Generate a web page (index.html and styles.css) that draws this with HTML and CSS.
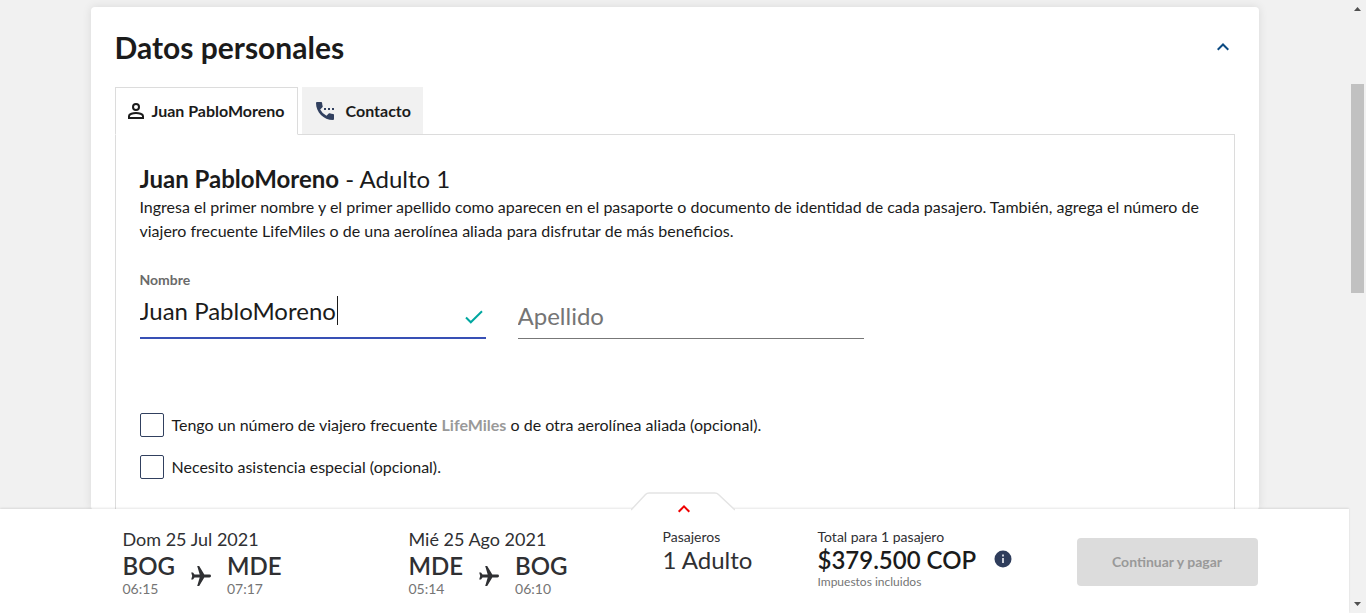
FILE: index.html
```html
<!DOCTYPE html>
<html lang="es">
<head>
<meta charset="utf-8">
<meta name="viewport" content="width=device-width, initial-scale=1">
<title>Datos personales</title>
<link rel="stylesheet" href="styles.css">
</head>
<body>
<div class="window">
  <div class="page">
    <main class="content">
      <section class="card">
        <header class="card-header">
          <h1 class="card-title">Datos personales</h1>
          <button class="collapse" type="button" aria-label="Contraer">
            <svg width="12" height="8" viewBox="0 0 12 8" fill="none" stroke="#0b4a82" stroke-width="2"><path d="M.7 6.8 6 1.5l5.3 5.3"/></svg>
          </button>
        </header>
        <div class="tabs" role="tablist">
          <button class="tab tab-active" type="button" role="tab" aria-selected="true">
            <svg width="16" height="16" viewBox="0 0 16 16" fill="none" stroke="#1b1b1b" stroke-width="2"><circle cx="8" cy="4" r="3"/><path d="M1 15v-2c0-2 4-3 7-3s7 1 7 3v2z"/></svg>
            Juan PabloMoreno
          </button>
          <button class="tab tab-contact" type="button" role="tab" aria-selected="false">
            <svg width="18" height="18" viewBox="0 0 18 18" fill="#31405f"><path d="M1 0h4.200q.8 0 .9.900c.1 1.200.3 2.300.6 3.300q.2.600-.3 1.100L4.200 7.500a14 14 0 0 0 6.300 6.300l2.200-2.200q.5-.5 1.100-.3 1.600.5 3.300.6.900.1.900.9V17q0 1-1 1C7.600 18 0 10.400 0 1q0-1 1-1z"/><path d="M8 6h2v2H8zM12 6h2v2h-2zM16 6h2v2h-2z"/></svg>
            Contacto
          </button>
        </div>
        <div class="panel" role="tabpanel">
          <h2 class="passenger"><strong>Juan PabloMoreno</strong> - Adulto 1</h2>
          <p class="intro">Ingresa el primer nombre y el primer apellido como aparecen en el pasaporte o documento de identidad de cada pasajero. También, agrega el número de viajero frecuente LifeMiles o de una aerolínea aliada para disfrutar de más beneficios.</p>
          <form class="fields">
            <div class="field">
              <label class="field-label" for="nombre">Nombre</label>
              <div class="field-box field-box-active">
                <input class="field-input" id="nombre" type="text" value="Juan PabloMoreno">
                <span class="caret"></span>
                <svg class="check" width="18" height="14" viewBox="0 0 18 14" fill="none" stroke="#00a7a0" stroke-width="2"><path d="m1 7.500 4.800 4.800L17 1.300"/></svg>
              </div>
            </div>
            <div class="field">
              <div class="field-box field-box-empty">
                <input class="field-input" id="apellido" type="text" placeholder="Apellido" aria-label="Apellido">
              </div>
            </div>
          </form>
          <div class="options">
            <label class="option" for="frecuente"><input class="box" id="frecuente" type="checkbox"><span>Tengo un número de viajero frecuente <b class="brand">LifeMiles</b> o de otra aerolínea aliada (opcional).</span></label>
            <label class="option" for="asistencia"><input class="box" id="asistencia" type="checkbox"><span>Necesito asistencia especial (opcional).</span></label>
          </div>
        </div>
      </section>
    </main>
    <footer class="summary">
      <button class="expand" type="button" aria-label="Ver detalle">
        <svg width="104" height="24" viewBox="0 0 104 24" fill="none"><path d="M0 20v-2L14.500 2.500Q16 1 18 1H84q2 0 3.500 1.500L104 18v2z" fill="#fff"/><path d="M0 18 14.500 2.500Q16 1 18 1H84q2 0 3.500 1.500L104 18" stroke="#e4e4e4" stroke-width="1.500"/><path d="m47.700 19.700 5.300-5.300 5.300 5.300" stroke="#f00000" stroke-width="2"/></svg>
      </button>
      <div class="summary-grid">
        <div class="flight">
          <div class="date">Dom 25 Jul 2021</div>
          <div class="route">
            <div><div class="code">BOG</div><div class="time">06:15</div></div>
            <svg class="plane" width="20" height="20" viewBox="0 0 20 20" fill="#2f3033"><path d="M20 10q0 1.400-1.500 1.400h-5.200L8.200 20h-2l2.500-8.600H3.500L2 13.500H.2L1.200 10 .2 6.500H2l1.500 2.100h5.200L6.200 0h2l5.100 8.600h5.200Q20 8.600 20 10z"/></svg>
            <div><div class="code">MDE</div><div class="time">07:17</div></div>
          </div>
        </div>
        <div class="flight">
          <div class="date">Mié 25 Ago 2021</div>
          <div class="route">
            <div><div class="code">MDE</div><div class="time">05:14</div></div>
            <svg class="plane" width="20" height="20" viewBox="0 0 20 20" fill="#2f3033"><path d="M20 10q0 1.400-1.500 1.400h-5.200L8.200 20h-2l2.500-8.600H3.500L2 13.500H.2L1.200 10 .2 6.500H2l1.500 2.100h5.200L6.200 0h2l5.100 8.600h5.200Q20 8.600 20 10z"/></svg>
            <div><div class="code">BOG</div><div class="time">06:10</div></div>
          </div>
        </div>
        <div>
          <div class="caption">Pasajeros</div>
          <div class="amount">1 Adulto</div>
        </div>
        <div class="total">
          <div>
            <div class="caption">Total para 1 pasajero</div>
            <div class="amount price">$379.500 COP</div>
            <div class="tax">Impuestos incluidos</div>
          </div>
          <button class="info" type="button" aria-label="Información">
            <svg width="18" height="18" viewBox="0 0 18 18"><circle cx="9" cy="9" r="8.500" fill="#2f3d5c"/><path d="M8 4.500h2v2H8zM8 8h2v5H8z" fill="#ccd0da"/></svg>
          </button>
        </div>
        <button class="pay" type="button" disabled>Continuar y pagar</button>
      </div>
    </footer>
  </div>
  <div class="scroll" aria-hidden="true">
    <svg class="arrow" width="7" height="4" viewBox="0 0 7 4" fill="#505050"><path d="M0 4 3.500 0 7 4z"/></svg>
    <div class="track"><div class="thumb"></div></div>
    <svg class="arrow" width="7" height="4" viewBox="0 0 7 4" fill="#505050"><path d="M0 0h7L3.500 4z"/></svg>
  </div>
</div>
</body>
</html>
```
FILE: styles.css
```css
* {
  box-sizing: border-box;
}

body {
  margin: 0;
  font-family: Lato, "Liberation Sans", sans-serif;
  font-size: 16px;
  line-height: 24px;
  color: #1b1b1b;
  background: #f1f1f1;
}

button,
input {
  font: inherit;
  color: inherit;
}

button {
  padding: 0;
  border: 0;
  background: none;
}

h1,
h2,
p {
  margin: 0;
}

svg {
  display: block;
  flex: none;
}

.window {
  display: flex;
  height: 100vh;
  overflow: hidden;
}

.page {
  flex: 1;
  min-width: 0;
  display: flex;
  flex-direction: column;
}

.content {
  flex: 1;
  min-height: 0;
  overflow: hidden;
  display: flex;
  padding: 7px 24px 0;
}

.card {
  width: 100%;
  max-width: 1168px;
  min-height: 100%;
  height: max-content;
  margin: 0 auto;
  padding: 20px 24px 0;
  background: #fff;
  border-radius: 4px;
  box-shadow: 0 0 10px rgba(0, 0, 0, 0.1);
}

.card-header {
  display: flex;
  justify-content: space-between;
  align-items: center;
  padding-right: 6px;
  margin-bottom: 20px;
}

.card-title {
  font-size: 30px;
  line-height: 40px;
  font-weight: 700;
}

.tabs {
  display: flex;
  gap: 4px;
}

.tab {
  display: flex;
  align-items: center;
  gap: 8px;
  height: 48px;
  padding: 0 12px;
  font-weight: 700;
}

.tab-active {
  position: relative;
  z-index: 1;
  border: 1px solid #dcdcdc;
  border-bottom-color: #fff;
  background: #fff;
}

.tab-contact {
  gap: 12px;
  padding-left: 14px;
  background: #f1f1f1;
}

.panel {
  margin-top: -1px;
  padding: 28px 24px 30px;
  border: 1px solid #dcdcdc;
  position: relative;
}

.passenger {
  font-size: 24px;
  line-height: 32px;
  font-weight: 400;
}

.passenger strong {
  font-weight: 700;
}

.fields {
  display: flex;
  align-items: flex-end;
  gap: 32px;
  margin-top: 25px;
}

.field {
  flex: 0 1 346px;
  min-width: 0;
}

.field-label {
  display: block;
  font-size: 14px;
  line-height: 23px;
  font-weight: 700;
  color: #6a6a6a;
}

.field-box {
  position: relative;
  display: flex;
  align-items: center;
  height: 48px;
  border-bottom: 1px solid #777;
}

.field-box-active {
  padding-bottom: 6px;
  border-bottom: 2px solid #3850b5;
}

.field-box-empty {
  padding-top: 2px;
}

.field-input {
  flex: 1;
  min-width: 0;
  padding: 0;
  border: 0;
  outline: 0;
  background: none;
  font-size: 24px;
  line-height: 32px;
}

.field-input::placeholder {
  color: #757575;
  opacity: 1;
}

.caret {
  position: absolute;
  left: 197px;
  top: 5px;
  width: 1px;
  height: 29px;
  background: #1b1b1b;
}

.check {
  margin: 12px 3px 0 0;
}

.options {
  display: grid;
  gap: 18px;
  margin-top: 74px;
}

.option {
  display: flex;
  align-items: center;
  gap: 8px;
}

.box {
  appearance: none;
  flex: none;
  width: 24px;
  height: 24px;
  margin: 0;
  border: 1px solid #31405f;
  border-radius: 2px;
  background: #fff;
}

.brand {
  color: #999;
}

.summary {
  position: relative;
  padding: 19px 24px 13px;
  background: #fff;
  color: #2f3033;
  box-shadow: 0 -1px 2px rgba(0, 0, 0, 0.1);
}

.expand {
  position: absolute;
  top: -17px;
  left: calc(50% - 44px);
}

.summary-grid {
  display: grid;
  grid-template-columns: 286fr 254fr 155fr 259fr 181fr;
  align-items: start;
  max-width: 1168px;
  min-height: 72px;
  margin: 0 auto;
  padding: 0 1px 0 32px;
}

.date {
  font-size: 18px;
  line-height: 22px;
}

.route {
  display: flex;
  align-items: center;
  gap: 16px;
}

.code {
  font-size: 24px;
  line-height: 32px;
  font-weight: 600;
}

.time {
  font-size: 14px;
  line-height: 14px;
  color: #757575;
}

.plane {
  margin-top: 6px;
}

.caption {
  font-size: 14px;
  line-height: 18px;
}

.amount {
  font-size: 24px;
  line-height: 28px;
}

.price {
  font-weight: 600;
  color: #1b1b1b;
}

.tax {
  font-size: 12px;
  line-height: 16px;
  color: #757575;
}

.total {
  display: flex;
  align-items: center;
  gap: 18px;
}

.pay {
  height: 48px;
  margin-top: 10px;
  border-radius: 4px;
  background: #dcdcdc;
  color: #999;
  font-size: 14px;
  font-weight: 700;
}

.scroll {
  flex: none;
  width: 17px;
  display: flex;
  flex-direction: column;
  align-items: center;
  padding: 7px 0;
  background: #f1f1f1;
}

.track {
  flex: 1;
  width: 13px;
  padding: 73px 0;
}

.thumb {
  height: 47%;
  background: #c1c1c1;
}
```
